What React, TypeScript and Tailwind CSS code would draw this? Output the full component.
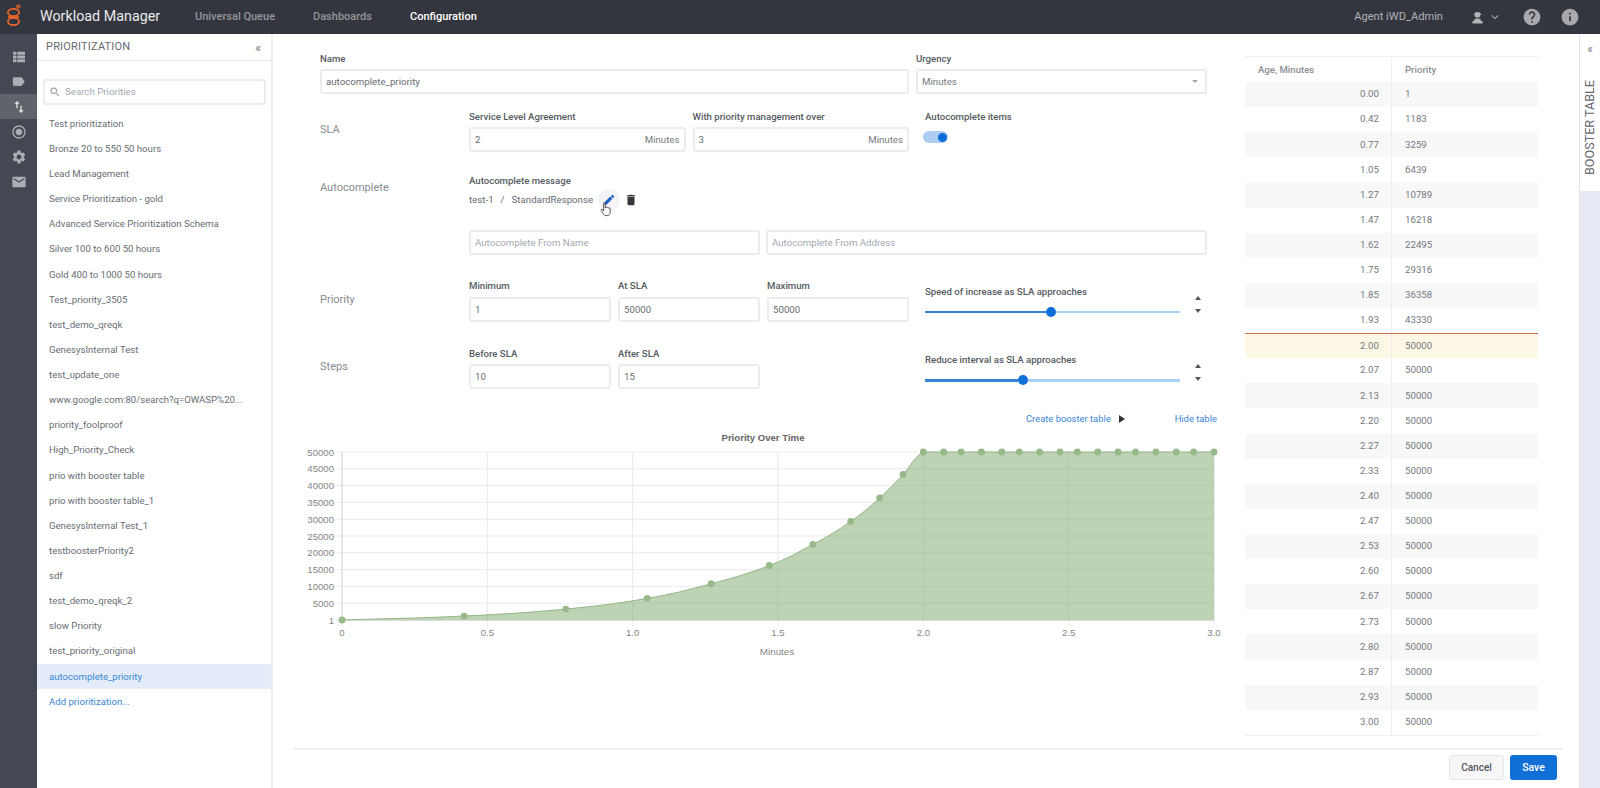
import React from "react";
import { MdLabel, MdSwapVert, MdRadioButtonChecked, MdSettings, MdEmail, MdHelp, MdInfo, MdEdit, MdDelete, MdSearch, MdKeyboardArrowDown } from "react-icons/md";
import { FaThList } from "react-icons/fa";

const items = ["Test prioritization","Bronze 20 to 550 50 hours","Lead Management","Service Prioritization - gold","Advanced Service Prioritization Schema","Silver 100 to 600 50 hours","Gold 400 to 1000 50 hours","Test_priority_3505","test_demo_qreqk","GenesysInternal Test","test_update_one","www.google.com:80/search?q=OWASP%20...","priority_foolproof","High_Priority_Check","prio with booster table","prio with booster table_1","GenesysInternal Test_1","testboosterPriority2","sdf","test_demo_qreqk_2","slow Priority","test_priority_original"];

const data: [string, number][] = [["0.00",1],["0.42",1183],["0.77",3259],["1.05",6439],["1.27",10789],["1.47",16218],["1.62",22495],["1.75",29316],["1.85",36358],["1.93",43330],["2.00",50000],["2.07",50000],["2.13",50000],["2.20",50000],["2.27",50000],["2.33",50000],["2.40",50000],["2.47",50000],["2.53",50000],["2.60",50000],["2.67",50000],["2.73",50000],["2.80",50000],["2.87",50000],["2.93",50000],["3.00",50000]];

const X0 = 48, XU = 290.67, YB = 190, YH = 168;
const pts = data.map(([a, v]) => [X0 + parseFloat(a) * XU, YB - (v / 50000) * YH]);

function curve() {
  const t = 0.4;
  const c = pts.map((p, i) => {
    const a = pts[Math.max(i - 1, 0)], b = pts[Math.min(i + 1, pts.length - 1)];
    const d1 = Math.hypot(p[0] - a[0], p[1] - a[1]), d2 = Math.hypot(b[0] - p[0], b[1] - p[1]);
    const sum = d1 + d2 || 1;
    const f1 = (t * d1) / sum, f2 = (t * d2) / sum;
    return { px: p[0] - f1 * (b[0] - a[0]), py: Math.max(p[1] - f1 * (b[1] - a[1]), 22), nx: p[0] + f2 * (b[0] - a[0]), ny: Math.max(p[1] + f2 * (b[1] - a[1]), 22) };
  });
  let d = `M${pts[0][0]} ${pts[0][1]}`;
  for (let i = 1; i < pts.length; i++) {
    d += ` C${c[i - 1].nx} ${c[i - 1].ny} ${c[i].px} ${c[i].py} ${pts[i][0]} ${pts[i][1]}`;
  }
  return d;
}

function Label({ children }: { children: React.ReactNode }) {
  return <div className="h-[14px] leading-[14px] text-[9.6px] font-medium text-[#555a60] whitespace-nowrap">{children}</div>;
}

function Input({ value, unit, placeholder, className }: { value?: string; unit?: string; placeholder?: boolean; className?: string }) {
  return (
    <div className={`h-[25px] mt-[3px] border-2 border-[#ececee] rounded-[3px] bg-white flex items-center justify-between pl-[4px] pr-[4px] pt-[1px] text-[9.7px] whitespace-nowrap ${placeholder ? "text-[#a4a8b0]" : "text-[#686c72]"} ${className ?? ""}`}>
      <span>{value}</span>
      {unit && <span className="text-[#777b80]">{unit}</span>}
    </div>
  );
}

function Field({ label, value, unit, w, inputClass }: { label: string; value: string; unit?: string; w: string; inputClass?: string }) {
  return (
    <div className={w}>
      <Label>{label}</Label>
      <Input value={value} unit={unit} className={inputClass} />
    </div>
  );
}

function Spinner() {
  return (
    <div className="ml-[15px] mt-[11px] flex flex-col gap-[9px]">
      <svg width="6" height="4" viewBox="0 0 6 4"><path d="M0 4 L3 0 L6 4Z" fill="#555" /></svg>
      <svg width="6" height="4" viewBox="0 0 6 4"><path d="M0 0 L3 4 L6 0Z" fill="#555" /></svg>
    </div>
  );
}

function Slider({ label, left, thick }: { label: string; left: string; thick: string }) {
  return (
    <div className="w-[282px] ml-[16px] pt-[6px] flex">
      <div className="w-[255px]">
        <Label>{label}</Label>
        <div className="mt-[8px] h-[10px] flex items-center">
          <div className={`${left} ${thick} bg-[#3583d8]`} />
          <div className="w-[10px] h-[10px] rounded-full bg-[#0f6fd8] shrink-0" />
          <div className={`flex-1 ${thick} bg-[#a8d2f8]`} />
        </div>
      </div>
      <Spinner />
    </div>
  );
}

function Rail() {
  const cls = "h-[25px] flex items-center justify-center text-[#abaeb3]";
  return (
    <div className="w-[37px] shrink-0 bg-[#434852] pt-[10px]">
      <div className={cls}><FaThList size={12} /></div>
      <div className={cls}><MdLabel size={15} /></div>
      <div className={`${cls} bg-[#5f646b] text-[#e4e5e7]`}><MdSwapVert size={16} /></div>
      <div className={cls}><MdRadioButtonChecked size={16} /></div>
      <div className={cls}><MdSettings size={16} /></div>
      <div className={cls}><MdEmail size={16} /></div>
    </div>
  );
}

function Chart() {
  const line = curve();
  const area = `${line} L${pts[pts.length - 1][0]} ${YB} L${X0} ${YB} Z`;
  const yl = ["50000","45000","40000","35000","30000","25000","20000","15000","10000","5000"];
  const xl: [number, string][] = [[0,"0"],[0.5,"0.5"],[1,"1.0"],[1.5,"1.5"],[2,"2.0"],[2.5,"2.5"],[3,"3.0"]];
  return (
    <svg width="945" height="235" viewBox="0 0 945 235" className="ml-[21px] block" style={{ fontFamily: "'Liberation Sans', Arial, sans-serif" }}>
      <text x="469" y="11" textAnchor="middle" fontSize="9.6" fontWeight="700" fill="#666">Priority Over Time</text>
      {yl.map((l, i) => (
        <g key={l}>
          <line x1={X0 - 6} x2={X0 + 872} y1={22 + i * 16.8} y2={22 + i * 16.8} stroke="#ebebee" />
          <text x="40" y={25.5 + i * 16.8} textAnchor="end" fontSize="9.6" fill="#858585">{l}</text>
        </g>
      ))}
      <text x="40" y={193.5} textAnchor="end" fontSize="9.6" fill="#858585">1</text>
      {xl.map(([v, l]) => (
        <g key={l}>
          <line x1={X0 + v * XU} x2={X0 + v * XU} y1={22} y2={196} stroke="#e8e8ec" />
          <text x={X0 + v * XU} y={206} textAnchor="middle" fontSize="9.6" fill="#858585">{l}</text>
        </g>
      ))}
      <line x1={X0 - 6} x2={X0 + 872} y1={190.5} y2={190.5} stroke="#dcdcdc" />
      <line x1={X0} x2={X0} y1={22} y2={190} stroke="#d8d8d8" />
      <path d={area} fill="rgba(125,167,105,0.5)" />
      <path d={line} fill="none" stroke="#93b686" strokeWidth="1" />
      {pts.map((p, i) => <circle key={i} cx={p[0]} cy={p[1]} r="3.4" fill="#97b98a" />)}
      <text x="483" y="225" textAnchor="middle" fontSize="9.8" fill="#858585">Minutes</text>
    </svg>
  );
}

export default function App() {
  return (
    <div className="w-[1600px] h-[788px] overflow-hidden flex flex-col bg-white font-['Roboto',sans-serif]">
      <header className="h-[34px] shrink-0 bg-[#33363e] flex items-center">
        <svg width="40" height="34" viewBox="0 0 40 34" className="shrink-0">
          <circle cx="18.3" cy="6.6" r="1.5" fill="none" stroke="#e8662a" strokeWidth="1.3" />
          <ellipse cx="13.5" cy="12.5" rx="5.6" ry="3.6" fill="none" stroke="#e8662a" strokeWidth="1.8" />
          <ellipse cx="13.5" cy="21.5" rx="5.6" ry="3.6" fill="none" stroke="#e8662a" strokeWidth="1.8" />
          <path d="M8 17 H19" stroke="#e8662a" strokeWidth="1.8" fill="none" />
        </svg>
        <div className="w-[155px] text-[14.3px] text-[#e9eaeb] whitespace-nowrap">Workload Manager</div>
        <div className="w-[118px] text-[11px] font-medium text-[#94969b] whitespace-nowrap">Universal Queue</div>
        <div className="w-[97px] text-[11px] font-medium text-[#94969b] whitespace-nowrap">Dashboards</div>
        <div className="text-[11px] font-medium text-white whitespace-nowrap">Configuration</div>
        <div className="ml-auto text-[11.1px] text-[#b0b2b5] whitespace-nowrap">Agent iWD_Admin</div>
        <svg width="13" height="13" viewBox="0 0 13 13" className="ml-[28px]" fill="#b4b6b9">
          <circle cx="6.5" cy="4" r="2.8" />
          <path d="M3 4 C3 0.8 10 0.8 10 4" fill="none" stroke="#b4b6b9" strokeWidth="1" />
          <path d="M3.5 8 C5 7.2 8 7.2 9.5 8 L9.8 10 H11.5 V12.5 H1.5 V10 H3.2Z" />
        </svg>
        <MdKeyboardArrowDown size={14} className="ml-[4px] text-[#a8aaae]" />
        <MdHelp size={20} className="ml-[20px] text-[#a8a9ac]" />
        <MdInfo size={20} className="ml-[18px] mr-[20px] text-[#a8a9ac]" />
      </header>
      <div className="flex flex-1 min-h-0">
        <Rail />
        <aside className="w-[236px] shrink-0 border-r-2 border-[#eeeef0] flex flex-col">
          <div className="h-[27px] shrink-0 border-b border-[#e6e7ea] flex items-center justify-between pl-[9px] pr-[10px]">
            <span className="text-[11px] text-[#666a70] tracking-[0.2px]">PRIORITIZATION</span>
            <span className="text-[13px] text-[#777] leading-none">«</span>
          </div>
          <div className="ml-[6px] mr-[5px] mt-[18px] h-[26px] border-2 border-[#ececee] rounded-[3px] flex items-center pl-[4px] text-[#a4a8b0]">
            <MdSearch size={12} className="text-[#999ca3]" />
            <span className="ml-[4px] text-[9.7px] whitespace-nowrap">Search Priorities</span>
          </div>
          <div className="mt-[6.5px]">
            {items.map((t) => (
              <div key={t} className="h-[25.14px] flex items-center pl-[12px] text-[9.6px] text-[#696d73] whitespace-nowrap">{t}</div>
            ))}
            <div className="h-[25.14px] flex items-center pl-[12px] text-[9.6px] text-[#3b86d6] bg-[#e3ecf8] whitespace-nowrap">autocomplete_priority</div>
            <div className="h-[25.14px] flex items-center pl-[12px] text-[9.6px] text-[#3b86d6] whitespace-nowrap">Add prioritization...</div>
          </div>
        </aside>
        <main className="flex-1 min-w-0 flex flex-col">
          <div className="flex flex-1 min-h-0">
            <div className="w-[964px] shrink-0">
              <div className="ml-[47px] mt-[18px] flex">
                <Field label="Name" value="autocomplete_priority" w="w-[589px]" />
                <div className="w-[291px] ml-[7px]">
                  <Label>Urgency</Label>
                  <div className="h-[25px] mt-[3px] border-2 border-[#ececee] rounded-[3px] flex items-center justify-between pl-[4px] pr-[7px] text-[9.7px] text-[#75797f]">
                    <span className="pt-[2px]">Minutes</span>
                    <svg width="6" height="3" viewBox="0 0 6 3"><path d="M0 0 L3 3 L6 0Z" fill="#a5a5a5" /></svg>
                  </div>
                </div>
              </div>
              <div className="ml-[47px] mt-[16px] flex">
                <div className="w-[149px] pt-[12px] text-[11px] text-[#888b90]">SLA</div>
                <div className="w-[440px] flex gap-[7px]">
                  <Field label="Service Level Agreement" value="2" unit="Minutes" w="flex-1" />
                  <Field label="With priority management over" value="3" unit="Minutes" w="flex-1" />
                </div>
                <div className="ml-[16px]">
                  <Label>Autocomplete items</Label>
                  <div className="mt-[7px] -ml-[2px] w-[25px] h-[12px] rounded-full bg-[#afcdf2] flex items-center justify-end pr-[1.5px]">
                    <div className="w-[9px] h-[9px] rounded-full bg-[#0f6fd8]" />
                  </div>
                </div>
              </div>
              <div className="ml-[47px] mt-[22px] flex">
                <div className="w-[149px] pt-[6px] text-[11px] text-[#888b90]">Autocomplete</div>
                <div>
                  <Label>Autocomplete message</Label>
                  <div className="mt-[3px] h-[18px] flex items-center text-[9.7px] text-[#666a70] whitespace-nowrap">
                    <span>test-1</span>
                    <span className="ml-[7px]">/</span>
                    <span className="ml-[7px]">StandardResponse</span>
                    <div className="relative ml-[5px] w-[22px] h-[22px] rounded-full bg-[#f4f4f6] flex items-center justify-center">
                      <MdEdit size={14} className="text-[#1c5fc7]" />
                      <svg width="12" height="15" viewBox="0 0 13 16" className="absolute left-[2px] top-[13px]">
                        <path d="M4 1.2 C4 .4 5.6 .4 5.6 1.2 V6.2 L6 6 C6.2 5.3 7.6 5.3 7.7 6.2 C8 5.6 9.3 5.7 9.4 6.6 C9.8 6 11 6.2 11 7.2 V11 C11 13 10 14.6 8.5 14.6 H6.2 C5 14.6 4.3 13.8 3.6 12.6 L1.3 9 C.8 8.1 2 7.3 2.8 8.2 L4 9.6 Z" fill="#fff" stroke="#333" strokeWidth="0.9" strokeLinejoin="round" />
                      </svg>
                    </div>
                    <MdDelete size={14} className="ml-[4px] text-[#33363b]" />
                  </div>
                </div>
              </div>
              <div className="ml-[196px] mt-[18px] flex gap-[6px]">
                <Input value="Autocomplete From Name" placeholder className="w-[291px]" />
                <Input value="Autocomplete From Address" placeholder className="w-[441px]" />
              </div>
              <div className="ml-[47px] mt-[24px] flex">
                <div className="w-[149px] pt-[13px] text-[11px] text-[#888b90]">Priority</div>
                <div className="w-[440px] flex gap-[7px]">
                  <Field label="Minimum" value="1" w="flex-1" inputClass="mt-[4px]" />
                  <Field label="At SLA" value="50000" w="flex-1" inputClass="mt-[4px]" />
                  <Field label="Maximum" value="50000" w="flex-1" inputClass="mt-[4px]" />
                </div>
                <Slider label="Speed of increase as SLA approaches" left="w-[121px]" thick="h-[2px]" />
              </div>
              <div className="ml-[47px] mt-[25px] flex">
                <div className="w-[149px] pt-[12px] text-[11px] text-[#888b90]">Steps</div>
                <div className="w-[440px] flex gap-[7px]">
                  <Field label="Before SLA" value="10" w="w-[142px]" />
                  <Field label="After SLA" value="15" w="w-[142px]" />
                </div>
                <Slider label="Reduce interval as SLA approaches" left="w-[93px]" thick="h-[3px]" />
              </div>
              <div className="ml-[753px] mt-[22px] h-[16px] flex items-center text-[9.4px] text-[#3b86d6] whitespace-nowrap">
                <span>Create booster table</span>
                <svg width="6" height="8" viewBox="0 0 6 8" className="ml-[8px]"><path d="M0 0 L6 4 L0 8Z" fill="#333" /></svg>
                <span className="ml-[50px]">Hide table</span>
              </div>
              <div className="mt-[3px]"><Chart /></div>
            </div>
            <div className="w-[293px] ml-[8px] mt-[22px] self-start border-t border-b border-[#eeeef0]">
              <div className="h-[25px] pt-[1px] flex text-[9.6px] font-medium text-[#8b8e93]">
                <div className="w-[147px] pl-[13px] flex items-center border-r border-[#eeeef0]">Age, Minutes</div>
                <div className="pl-[13px] flex items-center">Priority</div>
              </div>
              {data.map(([a, v], i) => (
                <div key={a} className={`h-[25.12px] flex text-[9.7px] text-[#75797e] ${a === "2.00" ? "bg-[#fdf8e5] border-t border-[#d9685f]" : i % 2 === 0 ? "bg-[#f8f8f8]" : ""}`}>
                  <div className="w-[147px] pr-[12px] flex items-center justify-end border-r border-[#eeeef0]">{a}</div>
                  <div className="pl-[13px] flex items-center">{v}</div>
                </div>
              ))}
            </div>
          </div>
          <div className="ml-[21px] w-[1269px] h-[40px] shrink-0 border-t-2 border-[#eeeef0] pt-[5px] flex justify-end gap-[6px] pr-[6px]">
            <div className="w-[55px] h-[25px] rounded-[3px] border border-[#e6e6e8] bg-[#f6f6f8] flex items-center justify-center text-[10px] font-medium text-[#55585e]">Cancel</div>
            <div className="w-[47px] h-[25px] rounded-[3px] bg-[#1070d8] flex items-center justify-center text-[10.5px] font-medium text-white">Save</div>
          </div>
        </main>
        <div className="w-[21px] shrink-0 border-l border-[#e2e3e8] bg-[#e7eaf4] flex flex-col">
          <div className="h-[157px] bg-white flex flex-col items-center">
            <span className="mt-[9px] text-[12px] text-[#777] leading-none">«</span>
            <span className="mt-[25px] [writing-mode:vertical-rl] rotate-180 text-[12.6px] text-[#666a70] whitespace-nowrap">BOOSTER TABLE</span>
          </div>
        </div>
      </div>
    </div>
  );
}
